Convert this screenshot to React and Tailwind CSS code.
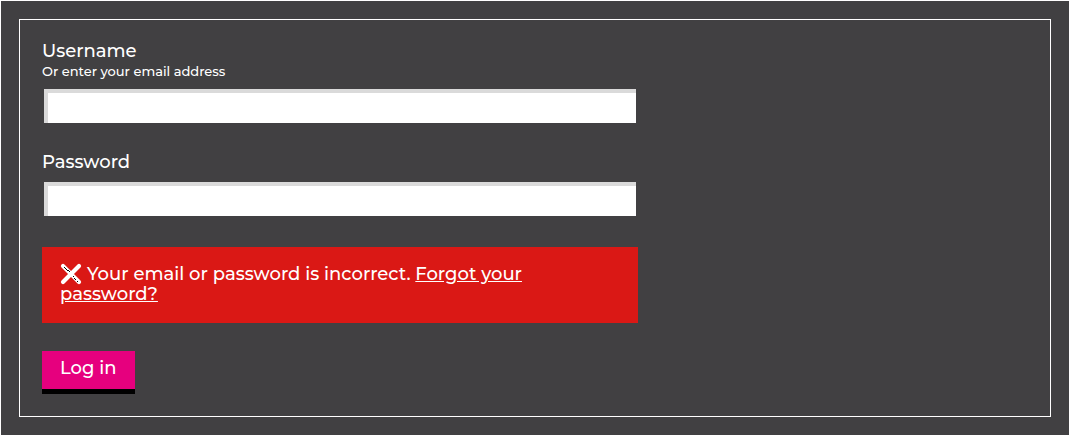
import React from "react";

function CrossIcon() {
  return (
    <svg
      className="-mt-[5px] mr-[5px] -mb-[3px] inline-block h-[22px] w-[22px] align-middle"
      viewBox="0 0 22 22"
      fill="none"
      aria-hidden="true"
    >
      <path d="M3 3L19 19M19 3L3 19" stroke="#fff" strokeWidth="4.2" strokeLinecap="round" />
      <path
        d="M4 4h1v1h-1zM5 5h1v1h-1zM6 6h1v1h-1zM7 7h1v1h-1zM8 7h1v1h-1zM9 8h1v1h-1zM13 13h1v1h-1zM14 15h1v1h-1zM15 16h1v1h-1zM17 18h1v1h-1z"
        fill="#000"
      />
    </svg>
  );
}

const inputStyle =
  "block h-[34px] w-full rounded-none border-t-4 border-l-4 border-[#dadada] bg-white px-2 text-lg text-black outline-none";

export default function App() {
  return (
    <main className="min-h-screen border border-b-0 border-white bg-[#414042] p-[18px] font-['Montserrat','Inter',sans-serif] text-[18px] leading-5 font-medium text-white">
      <form className="border border-white px-[22px] pt-[21px] pb-[22px]" onSubmit={(e) => e.preventDefault()}>
        <div className="w-full max-w-[596px]">
          <label htmlFor="username" className="block">
            Username
            <span className="mt-0.5 block text-[13px] leading-4">Or enter your email address</span>
          </label>
          <div className="mt-[10px] px-0.5">
            <input id="username" name="username" type="text" className={inputStyle} />
          </div>
          <label htmlFor="password" className="mt-[29px] block">
            Password
          </label>
          <div className="mt-[10px] px-0.5">
            <input id="password" name="password" type="password" className={inputStyle} />
          </div>
          <p role="alert" className="mt-[31px] bg-[#da1815] pt-[17px] pr-20 pb-[19px] pl-[18px]">
            <CrossIcon />
            Your email or password is incorrect.{" "}
            <a href="#forgot" className="underline">
              Forgot your password?
            </a>
          </p>
          <button
            type="submit"
            className="mt-7 block cursor-pointer border-b-5 border-black bg-[#e6007e] px-[18px] pt-[7px] pb-[11px]"
          >
            Log in
          </button>
        </div>
      </form>
    </main>
  );
}
